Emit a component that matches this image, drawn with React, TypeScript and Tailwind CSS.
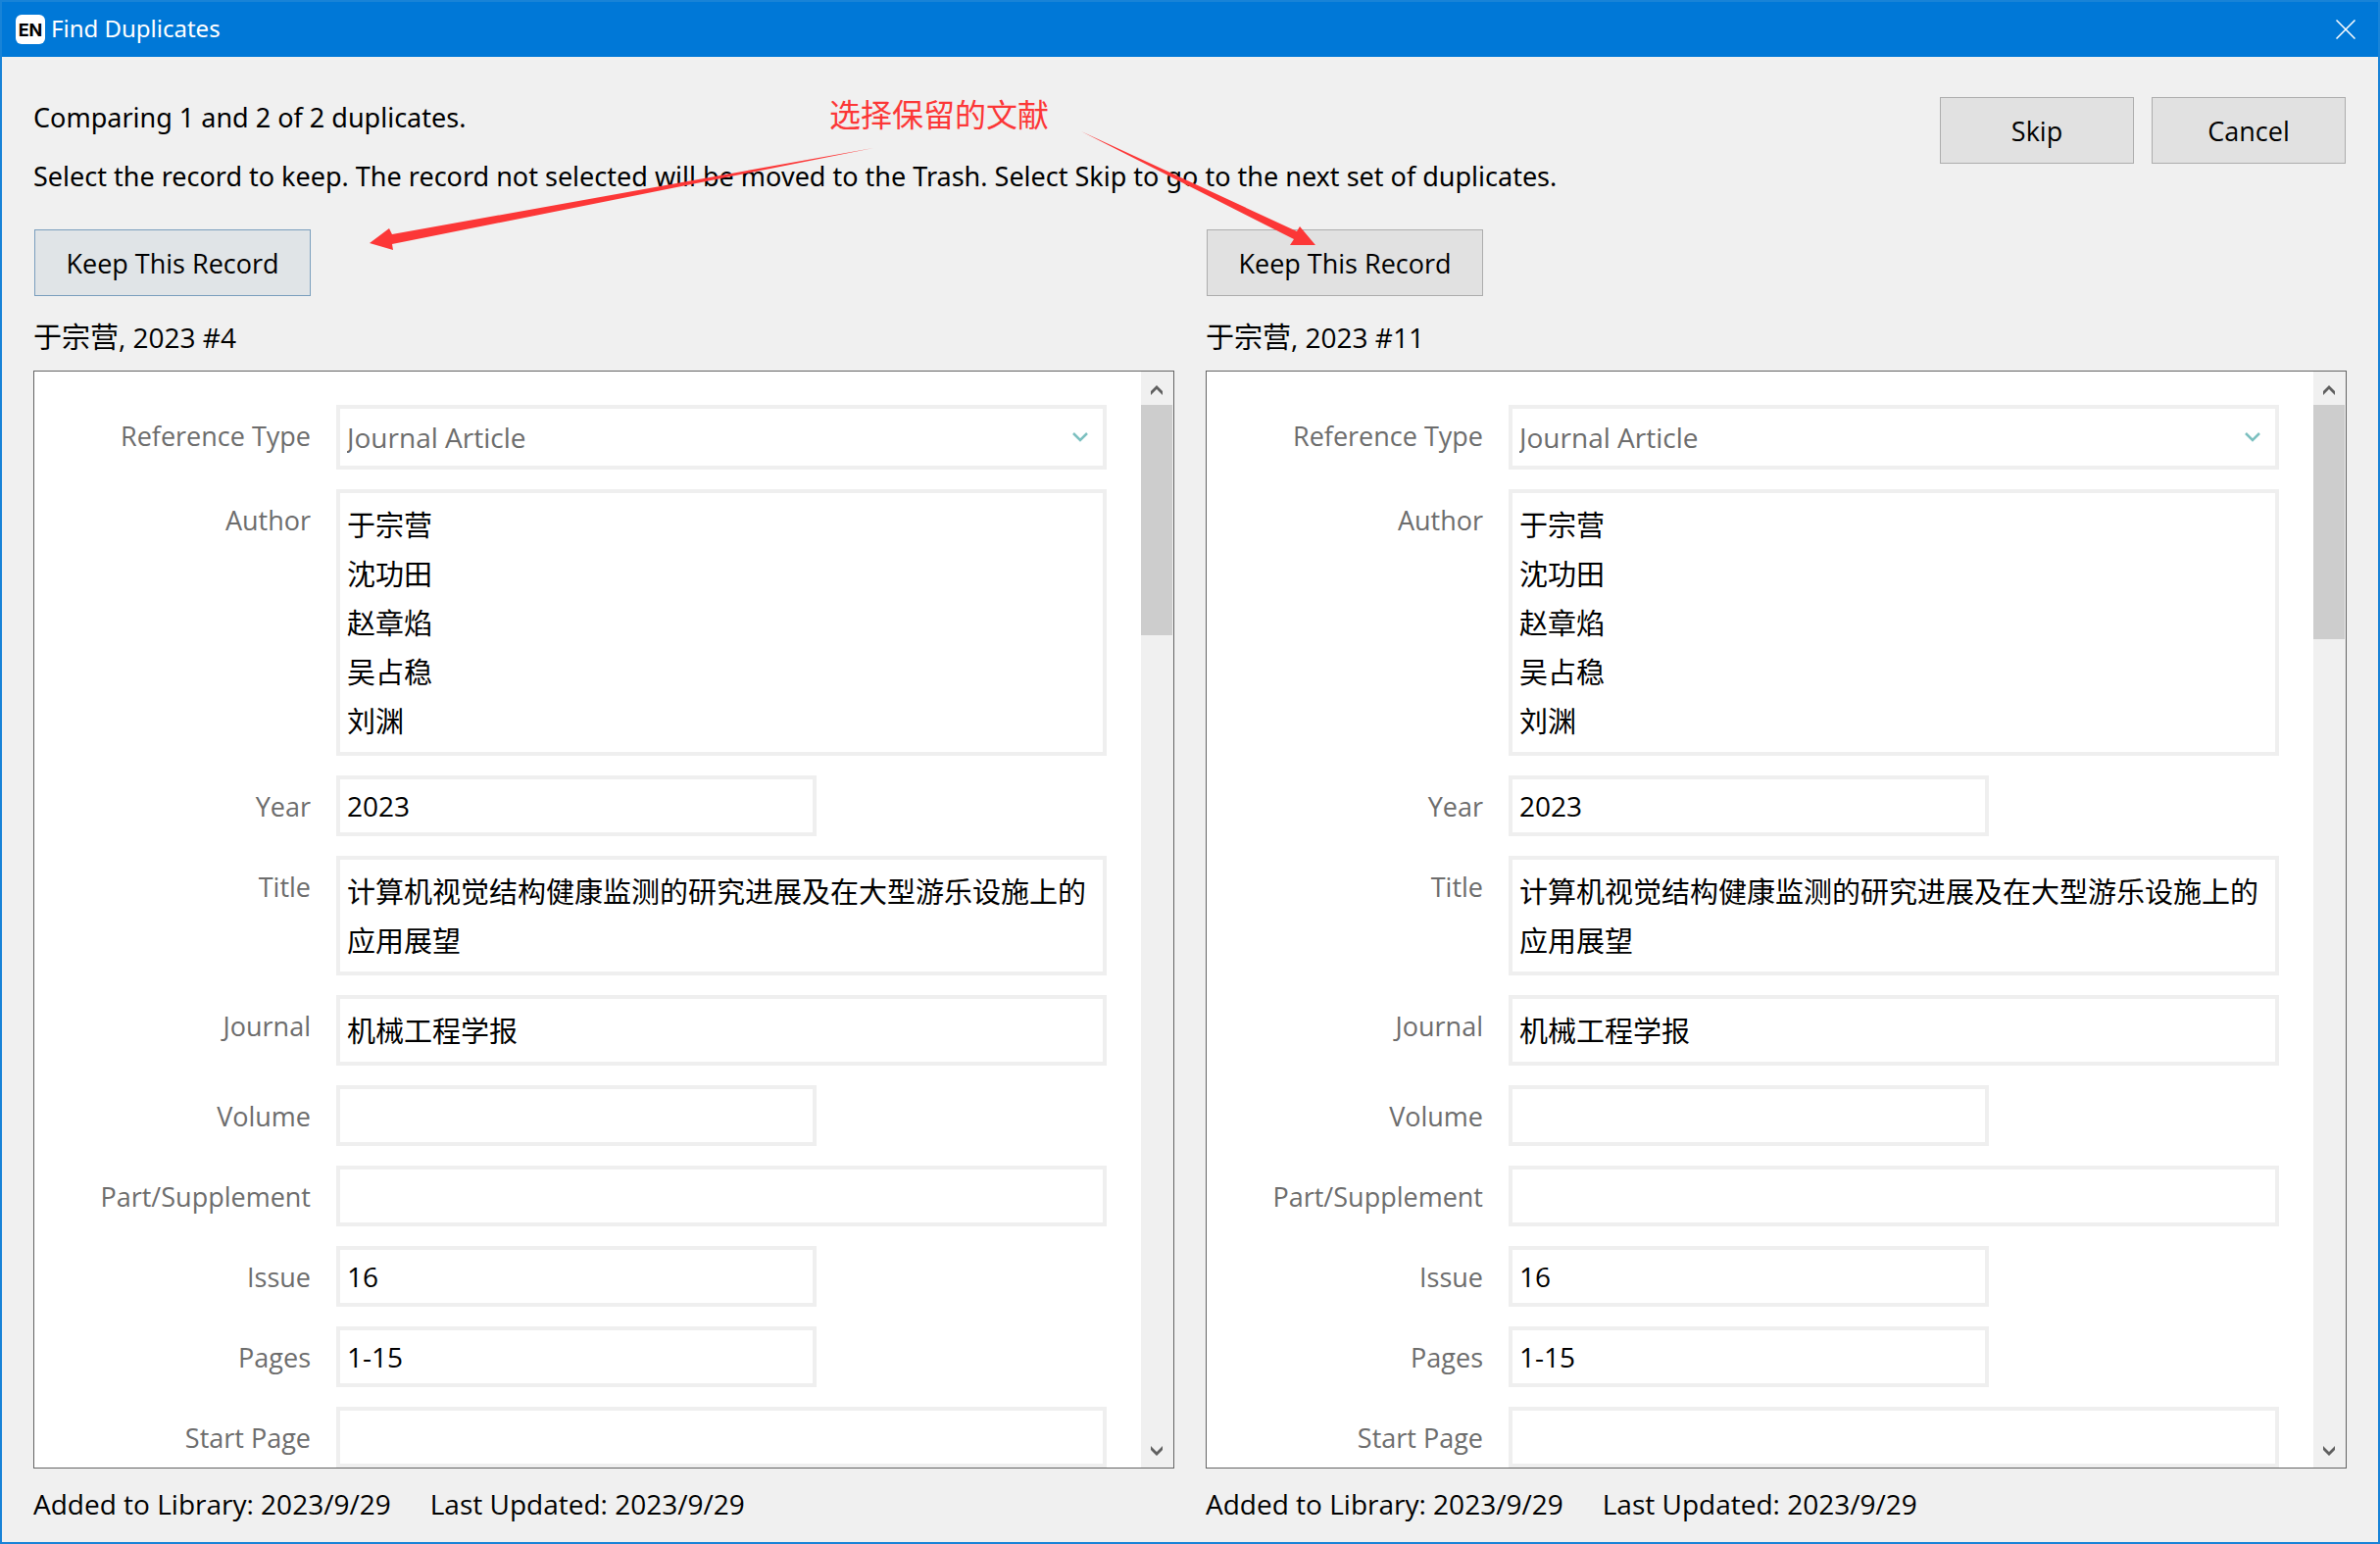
import React from "react";

type Kind = "select" | "short" | "long" | "area";

interface Field {
  label: string;
  kind: Kind;
  value: string;
  rows?: number;
}

interface RecordData {
  id: string;
  heading: string;
  focused: boolean;
  thumb: number;
}

const fields: Field[] = [
  { label: "Reference Type", kind: "select", value: "Journal Article" },
  { label: "Author", kind: "area", value: "于宗营\n沈功田\n赵章焰\n吴占稳\n刘渊", rows: 5 },
  { label: "Year", kind: "short", value: "2023" },
  { label: "Title", kind: "area", value: "计算机视觉结构健康监测的研究进展及在大型游乐设施上的应用展望", rows: 2 },
  { label: "Journal", kind: "area", value: "机械工程学报", rows: 1 },
  { label: "Volume", kind: "short", value: "" },
  { label: "Part/Supplement", kind: "long", value: "" },
  { label: "Issue", kind: "short", value: "16" },
  { label: "Pages", kind: "short", value: "1-15" },
  { label: "Start Page", kind: "long", value: "" },
];

const records: RecordData[] = [
  { id: "left", heading: ", 2023 #4", focused: true, thumb: 235 },
  { id: "right", heading: ", 2023 #11", focused: false, thumb: 239 },
];

const box = "block border-4 border-[#efefef] bg-white px-[7px] outline-none";

function Control({ field, id }: { field: Field; id: string }) {
  if (field.kind === "select") {
    return (
      <div className="relative min-w-0 flex-1">
        <select
          id={id}
          defaultValue={field.value}
          className={`${box} h-[66px] w-full appearance-none text-[#6d6d6d]`}
        >
          <option>{field.value}</option>
        </select>
        <svg
          className="pointer-events-none absolute top-7 right-[19px] h-[10px] w-4"
          viewBox="0 0 16 10"
          fill="none"
          stroke="#7cc0c0"
          strokeWidth="2.5"
        >
          <path d="M1 1 L8 8 L15 1" />
        </svg>
      </div>
    );
  }
  if (field.kind === "area") {
    return (
      <textarea
        id={id}
        rows={field.rows}
        defaultValue={field.value}
        className={`${box} min-w-0 flex-1 resize-none overflow-hidden pt-2 pb-[6px] text-[29px] leading-[50px]`}
      />
    );
  }
  return (
    <input
      id={id}
      type="text"
      defaultValue={field.value}
      className={
        field.kind === "short"
          ? `${box} h-[62px] w-[490px] min-w-0`
          : `${box} h-[62px] min-w-0 flex-1`
      }
    />
  );
}

function ScrollBar({ thumb }: { thumb: number }) {
  return (
    <div className="flex w-[33px] shrink-0 flex-col bg-[#f0f0f0]">
      <button aria-label="Scroll up" className="flex h-[34px] w-8 items-center justify-center pt-[3px]">
        <svg width="12" height="10" viewBox="0 0 12 10" fill="#606060">
          <path d="M0 6 L6 0 L12 6 V10 L6 4 L0 10 Z" />
        </svg>
      </button>
      <div className="w-8 bg-[#cdcdcd]" style={{ height: thumb }} />
      <div className="flex-1" />
      <button aria-label="Scroll down" className="flex h-[34px] w-8 items-center justify-center">
        <svg width="12" height="10" viewBox="0 0 12 10" fill="#606060">
          <path d="M0 4 L6 10 L12 4 V0 L6 6 L0 0 Z" />
        </svg>
      </button>
    </div>
  );
}

function RecordColumn({ record }: { record: RecordData }) {
  return (
    <section className="flex min-w-0 flex-1 flex-col">
      <button
        className={
          record.focused
            ? "ml-px h-[68px] w-[282px] border border-[#7a9ebd] bg-[#e0e4e7] pt-0.5 text-[27px]"
            : "ml-px h-[68px] w-[282px] border border-[#adadad] bg-[#e1e1e1] pt-0.5 text-[27px]"
        }
      >
        Keep This Record
      </button>
      <h2 className="h-[76px] pt-2 leading-[68px]">
        <span className="text-[29px]">于宗营</span>
        {record.heading}
      </h2>
      <div className="flex flex-1 border border-[#646464] bg-white">
        <form className="flex min-w-0 flex-1 flex-col gap-5 pt-[34px] pr-[35px]">
          {fields.map((field, i) => {
            const id = `${record.id}-${i}`;
            return (
              <div key={id} className="flex items-start gap-[26px]">
                <label
                  htmlFor={id}
                  className="h-[62px] w-[282px] shrink-0 text-right text-[27px] leading-[64px] text-[#6d6d6d]"
                >
                  {field.label}
                </label>
                <Control field={field} id={id} />
              </div>
            );
          })}
        </form>
        <ScrollBar thumb={record.thumb} />
      </div>
      <footer className="flex h-[75px] gap-10 leading-[72px]">
        <span>Added to Library: 2023/9/29</span>
        <span>Last Updated: 2023/9/29</span>
      </footer>
    </section>
  );
}

function Annotation() {
  return (
    <div className="pointer-events-none absolute -top-0.5 -left-0.5 text-[#fc3737]">
      <svg width="1360" height="270" viewBox="0 0 1360 270" fill="currentColor">
        <path d="M891 151 L400 239 L397 233 L377 248 L401 255 L400 249 Z" />
        <path d="M1103 134 L1323 236 L1326 231 L1342 250 L1316 250 L1320 244 Z" />
      </svg>
      <p className="absolute top-[93px] left-[846px] text-[32px] leading-[48px] whitespace-nowrap">
        选择保留的文献
      </p>
    </div>
  );
}

export default function App() {
  return (
    <div className="relative flex min-h-screen flex-col border-2 border-[#1883d7] bg-[#f0f0f0] font-['Open_Sans','Noto_Sans_CJK_SC',sans-serif] text-[28px] text-black">
      <header className="flex h-14 items-center bg-[#0078d7] pr-[23px] pl-[14px] text-white">
        <span className="flex size-[30px] items-center justify-center rounded-md bg-white font-['Inter',sans-serif] text-[18px] font-bold text-black">
          EN
        </span>
        <h1 className="flex-1 pb-0.5 pl-[6px] font-['Noto_Sans',sans-serif] text-[24px]">Find Duplicates</h1>
        <button aria-label="Close">
          <svg width="20" height="20" viewBox="0 0 20 20" stroke="white" strokeWidth="1.5">
            <path d="M0.5 0.5 L19.5 19.5 M19.5 0.5 L0.5 19.5" />
          </svg>
        </button>
      </header>
      <main className="flex flex-1 flex-col px-8 pt-8">
        <div className="flex items-start justify-between pb-6">
          <div className="font-['Noto_Sans',sans-serif] text-[27px] leading-[60px]">
            <p>Comparing 1 and 2 of 2 duplicates.</p>
            <p>
              Select the record to keep. The record not selected will be moved to the Trash. Select Skip
              to go to the next set of duplicates.
            </p>
          </div>
          <div className="mt-[9px] mr-px flex shrink-0 gap-[18px] text-[27px]">
            <button className="h-[68px] w-[198px] border border-[#adadad] bg-[#e1e1e1] pt-0.5">Skip</button>
            <button className="h-[68px] w-[198px] border border-[#adadad] bg-[#e1e1e1] pt-0.5">Cancel</button>
          </div>
        </div>
        <div className="flex flex-1 gap-8">
          {records.map((record) => (
            <RecordColumn key={record.id} record={record} />
          ))}
        </div>
      </main>
      <Annotation />
    </div>
  );
}
